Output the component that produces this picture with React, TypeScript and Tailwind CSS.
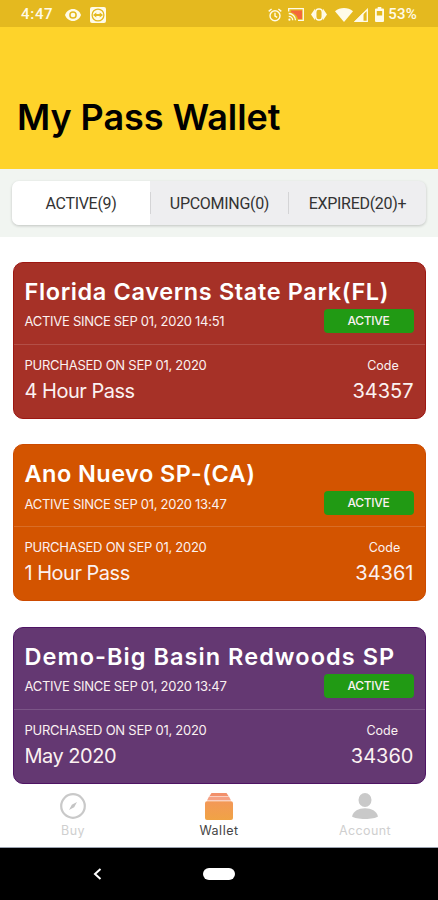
import { useState } from 'react'

interface Pass {
  park: string
  activeSince: string
  purchasedOn: string
  name: string
  code: string
  color: string
  titleSpacing: string
}

const passes: Pass[] = [
  {
    park: 'Florida Caverns State Park(FL)',
    activeSince: 'SEP 01, 2020 14:51',
    purchasedOn: 'SEP 01, 2020',
    name: '4 Hour Pass',
    code: '34357',
    color: 'bg-[#a63127] border-[#9d1712]',
    titleSpacing: 'tracking-[0.62px]',
  },
  {
    park: 'Ano Nuevo SP-(CA)',
    activeSince: 'SEP 01, 2020 13:47',
    purchasedOn: 'SEP 01, 2020',
    name: '1 Hour Pass',
    code: '34361',
    color: 'bg-[#d35400] border-[#cc4a00]',
    titleSpacing: 'tracking-[0.46px]',
  },
  {
    park: 'Demo-Big Basin Redwoods SP',
    activeSince: 'SEP 01, 2020 13:47',
    purchasedOn: 'SEP 01, 2020',
    name: 'May 2020',
    code: '34360',
    color: 'bg-[#643872] border-[#4e1464]',
    titleSpacing: 'tracking-[1.05px]',
  },
]

const tabs = ['ACTIVE(9)', 'UPCOMING(0)', 'EXPIRED(20)+']

function StatusBar() {
  return (
    <div className="flex h-[27px] shrink-0 items-center bg-[#e4b91f] pt-[2px] pr-5 pl-[21px] font-[Roboto,sans-serif] text-[15px] font-medium text-[#fffbe8]">
      <span className="w-[44px] tracking-[0.7px]">4:47</span>
      {/* Eye */}
      <svg width="16" height="12" viewBox="0 0 16 12">
        <path fill="currentColor" d="M8 0C4.3 0 1.300 2.400 0 6c1.300 3.600 4.300 6 8 6s6.700-2.400 8-6c-1.300-3.600-4.300-6-8-6Z" />
        <circle cx="8" cy="6" r="3.100" fill="none" stroke="#e4b91f" strokeWidth="1.500" />
      </svg>
      {/* Remote session */}
      <svg className="ml-[9px]" width="16" height="16" viewBox="0 0 16 16">
        <rect width="16" height="16" rx="2" fill="currentColor" />
        <circle cx="8" cy="8" r="5.900" fill="none" stroke="#e4b91f" strokeWidth="1.300" />
        <path fill="#e4b91f" d="m3 8 3.300-2.600v1.700h3.400V5.400L13 8l-3.300 2.600V8.900H6.300v1.700Z" />
      </svg>
      <div className="ml-auto flex items-center">
        {/* Alarm */}
        <svg width="14" height="14" viewBox="0 0 14 14" fill="none" stroke="currentColor" strokeWidth="1.400">
          <circle cx="7" cy="7.700" r="5" />
          <path d="M7 4.800v3.200l2.200 1.300M.7 3.400 3.600 1M13.300 3.400 10.400 1" />
        </svg>
        {/* Cast */}
        <svg className="ml-[6px]" width="16" height="13" viewBox="0 0 16 13" fill="none">
          <path d="M3 2.500h11v8.500H10C9.500 8 6.500 5 3 4.500Z" fill="#f4693a" />
          <path d="M.7 3.500V.7h14.600v11.600H10M.7 5.500a6.800 6.800 0 0 1 6.800 6.800M.7 8.300a4 4 0 0 1 4 4" stroke="currentColor" strokeWidth="1.300" />
          <circle cx="1.400" cy="11.700" r="1.100" fill="currentColor" />
        </svg>
        {/* Vibrate */}
        <svg className="ml-[7px]" width="16" height="13" viewBox="0 0 16 13" fill="none" stroke="currentColor" strokeWidth="1.500">
          <path d="M3.200 3.200.9 6.500l2.300 3.300ZM12.800 3.200l2.300 3.300-2.300 3.300Z" fill="currentColor" />
          <rect x="4.700" y="1" width="6.600" height="11" rx="3" />
        </svg>
        {/* Wifi */}
        <svg className="ml-[8px]" width="18" height="14" viewBox="0 0 18 14">
          <path fill="currentColor" d="M9 14 0 3.200C5-1 13-1 18 3.200Z" />
        </svg>
        {/* Signal */}
        <svg className="ml-[1px]" width="14" height="14" viewBox="0 0 14 14">
          <path fill="currentColor" d="M9.500 4.500V14H0Z" />
          <path fill="none" stroke="currentColor" strokeWidth="1.300" d="M1.500 13.300 13.300 1.500v11.800Z" />
        </svg>
        {/* Battery */}
        <svg className="ml-[7px]" width="9" height="15" viewBox="0 0 9 15">
          <path fill="currentColor" fillRule="evenodd" d="M2.700 0h3.600v1.500H8a1 1 0 0 1 1 1V14a1 1 0 0 1-1 1H1a1 1 0 0 1-1-1V2.500a1 1 0 0 1 1-1h1.700ZM1.800 4v4.500h5.400V4Z" />
        </svg>
        <span className="mr-[1px] ml-[4px] tracking-[0.2px]">53%</span>
      </div>
    </div>
  )
}

function PassCard({ pass }: { pass: Pass }) {
  return (
    <div className={`flex h-[157px] shrink-0 flex-col rounded-[10px] border text-[#fbf1f1] ${pass.color}`}>
      <div className="h-[82px] border-b border-white/15 px-[11px] pt-[14px]">
        <h2 className={`h-[30px] text-[23.5px] leading-[30px] font-semibold whitespace-nowrap text-white ${pass.titleSpacing}`}>
          {pass.park}
        </h2>
        <div className="mt-[2px] flex h-[24px] items-center justify-between">
          <span className="pt-[2px] text-[13px] tracking-[-0.28px]">ACTIVE SINCE {pass.activeSince}</span>
          <span className="flex h-[24px] w-[90px] items-center justify-center rounded-[4px] bg-[#219a14] text-[12px] font-medium tracking-[-0.3px]">
            ACTIVE
          </span>
        </div>
      </div>
      <div className="flex justify-between px-[11px] pt-[12px]">
        <div className="flex flex-col">
          <span className="text-[13px] leading-[17px] tracking-[-0.25px]">PURCHASED ON {pass.purchasedOn}</span>
          <span className="text-[20px] leading-[34px] tracking-[-0.5px]">{pass.name}</span>
        </div>
        <div className="flex flex-col items-center">
          <span className="text-[12.5px] leading-[18px]">Code</span>
          <span className="text-[20px] leading-[32px]">{pass.code}</span>
        </div>
      </div>
    </div>
  )
}

function BottomNav() {
  return (
    <nav className="grid h-[64px] shrink-0 grid-cols-3 border-b border-gray-400 bg-white text-[12.5px] leading-[16px] tracking-[0.4px] text-[#cfcfcf]">
      <div className="flex flex-col items-center pt-[9px]">
        <svg width="26" height="26" viewBox="0 0 26 26">
          <circle cx="13" cy="13" r="11.800" fill="none" stroke="#c9c9c9" strokeWidth="2.200" />
          <path fill="#c4c4c4" d="m17 9-2.800 5.200L9 17l2.800-5.200Z" />
        </svg>
        <span className="mt-[4px]">Buy</span>
      </div>
      <div className="flex flex-col items-center pt-[9px] text-[#444]">
        <svg width="28" height="27" viewBox="0 0 28 27">
          <defs>
            <linearGradient id="walletFill" x1="0" y1="0" x2="0" y2="1">
              <stop offset="0" stopColor="#f39858" />
              <stop offset="1" stopColor="#f0a345" />
            </linearGradient>
          </defs>
          <path fill="#f2906b" d="M6.500 0h15l2 3h-19Z" />
          <path fill="#f5a183" d="M4 3.400h20l2 4H2Z" />
          <rect y="8.200" width="28" height="18.800" rx="2" fill="url(#walletFill)" />
        </svg>
        <span className="mt-[3px] tracking-[0.5px]">Wallet</span>
      </div>
      <div className="flex flex-col items-center pt-[9px]">
        <svg width="26" height="26" viewBox="0 0 26 26" fill="#c9c9c9">
          <ellipse cx="13" cy="7" rx="6.500" ry="7" />
          <path d="M0 23.500C1.500 18 6.500 15.300 13 15.300S24.500 18 26 23.500C24 25 19 26 13 26S2 25 0 23.500Z" />
        </svg>
        <span className="mt-[4px]">Account</span>
      </div>
    </nav>
  )
}

export default function App() {
  const [activeTab, setActiveTab] = useState(tabs[0])

  return (
    <div className="flex h-[900px] w-[438px] flex-col overflow-hidden bg-white font-[Inter,sans-serif]">
      <StatusBar />
      <header className="h-[142px] shrink-0 bg-[#fed32a] pt-[67px] pl-[17px]">
        <h1 className="text-[36px] leading-[46px] font-semibold tracking-[-0.05px] whitespace-nowrap text-black">My Pass Wallet</h1>
      </header>

      <div className="h-[68px] shrink-0 bg-[#f1f5f1] px-[12px] pt-[12px]">
        <div className="flex h-[44px] items-center overflow-hidden rounded-[7px] bg-[#eeeef0] shadow-[0_1px_3px_rgba(0,0,0,0.2)]">
          {tabs.map((tab, i) => (
            <div key={tab} className="flex h-full flex-1 items-center">
              {i > 0 && <div className="h-[22px] w-px bg-[#d4d4d6]" />}
              <button
                onClick={() => setActiveTab(tab)}
                className={`h-full flex-1 pt-[2px] font-[Roboto,sans-serif] text-[16px] tracking-[-0.3px] text-[#333] ${
                  activeTab === tab ? 'bg-white' : ''
                }`}
              >
                {tab}
              </button>
            </div>
          ))}
        </div>
      </div>

      <main className="flex min-h-0 flex-1 flex-col gap-[25.4px] px-[12.5px] pt-[25px]">
        {passes.map(pass => (
          <PassCard key={pass.code} pass={pass} />
        ))}
      </main>

      <BottomNav />

      {/* System navigation */}
      <div className="grid h-[52px] shrink-0 grid-cols-3 items-center bg-black">
        <svg className="ml-[93px]" width="9" height="12" viewBox="0 0 9 12" fill="none" stroke="#fff" strokeWidth="2">
          <path d="M7.500 1 2 6l5.500 5" />
        </svg>
        <div className="mx-auto h-[12px] w-[32px] rounded-full bg-white" />
      </div>
    </div>
  )
}
